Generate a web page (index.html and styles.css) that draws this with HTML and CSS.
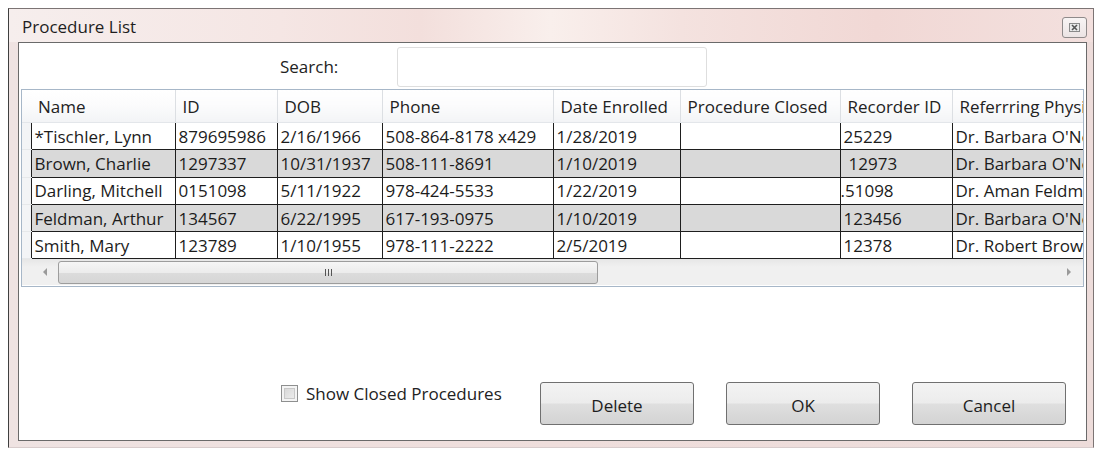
FILE: index.html
```html
<!DOCTYPE html>
<html>
<head>
<meta charset="utf-8">
<title>Procedure List</title>
<link rel="stylesheet" href="styles.css">
</head>
<body>
<div class="window">
  <div class="titlebar">
    <span class="title">Procedure List</span>
    <span class="close-btn">
      <svg width="11" height="9" viewBox="0 0 11 9"><rect x="0.5" y="0.5" width="10" height="8" fill="#e9e9e9" stroke="#8a8a8a"/><path d="M3 2 L8 7 M8 2 L3 7" stroke="#555" stroke-width="1.6"/></svg>
    </span>
  </div>
  <div class="client">
    <div class="search-row">
      <span class="search-label">Search:</span>
      <div class="search-box"></div>
    </div>
    <div class="grid">
      <table class="table">
        <colgroup>
          <col class="c-gut"><col class="c-name"><col class="c-id"><col class="c-dob"><col class="c-phone"><col class="c-date"><col class="c-closed"><col class="c-rec"><col class="c-ref">
        </colgroup>
        <thead>
          <tr>
            <th class="gut"></th><th>Name</th><th>ID</th><th>DOB</th><th>Phone</th><th>Date Enrolled</th><th>Procedure Closed</th><th>Recorder ID</th><th>Referrring Physician</th>
          </tr>
        </thead>
        <tbody>
          <tr>
            <td class="gut"></td><td>*Tischler, Lynn</td><td>879695986</td><td>2/16/1966</td><td>508-864-8178 x429</td><td>1/28/2019</td><td></td><td>25229</td><td>Dr. Barbara O'Neil</td>
          </tr>
          <tr class="alt">
            <td class="gut"></td><td>Brown, Charlie</td><td>1297337</td><td>10/31/1937</td><td>508-111-8691</td><td>1/10/2019</td><td></td><td class="rec-shift">12973</td><td>Dr. Barbara O'Neil</td>
          </tr>
          <tr>
            <td class="gut"></td><td>Darling, Mitchell</td><td>0151098</td><td>5/11/1922</td><td>978-424-5533</td><td>1/22/2019</td><td></td><td class="rec-left">.51098</td><td>Dr. Aman Feldman</td>
          </tr>
          <tr class="alt">
            <td class="gut"></td><td>Feldman, Arthur</td><td>134567</td><td>6/22/1995</td><td>617-193-0975</td><td>1/10/2019</td><td></td><td>123456</td><td>Dr. Barbara O'Neil</td>
          </tr>
          <tr>
            <td class="gut"></td><td>Smith, Mary</td><td>123789</td><td>1/10/1955</td><td>978-111-2222</td><td>2/5/2019</td><td></td><td>12378</td><td>Dr. Robert Brown</td>
          </tr>
        </tbody>
      </table>
      <div class="hscroll">
        <span class="arrow-left"></span>
        <div class="thumb"><span class="grip"><i></i><i></i><i></i></span></div>
        <span class="arrow-right"></span>
      </div>
    </div>
    <div class="bottom-bar">
      <label class="check">
        <span class="check-box"></span>
        <span class="check-text">Show Closed Procedures</span>
      </label>
      <div class="buttons">
        <span class="btn">Delete</span>
        <span class="btn">OK</span>
        <span class="btn">Cancel</span>
      </div>
    </div>
  </div>
</div>
</body>
</html>
```

FILE: styles.css
```css
html, body {
  margin: 0;
  padding: 0;
  background: #ffffff;
}
body {
  font-family: "Open Sans", "Noto Sans", "DejaVu Sans", sans-serif;
  font-size: 17px;
  color: #1c1c1c;
}
.window {
  margin: 8px 0 0 8px;
  width: 1084px;
  height: 438px;
  border: 1px solid #7c7474;
  border-left-color: #3f3f3f;
  border-bottom-color: #d8cccc;
  background: linear-gradient(90deg, #efe3e2 0%, #efdedc 50%, #eddcda 100%);
  display: flex;
  flex-direction: column;
}
.titlebar {
  height: 33px;
  display: flex;
  align-items: center;
  justify-content: space-between;
  padding: 0 6px 0 13px;
  background: linear-gradient(90deg, #f6eeed 0%, #f5e6e4 25%, #f3dfdc 38%, #f9efec 50%, #f4e2df 62%, #f1d8d5 80%, #f3e0de 100%);
}
.title {
  font-size: 17px;
  color: #1e1e1e;
  padding-top: 1px;
}
.close-btn {
  width: 23px;
  height: 19px;
  border: 1px solid #8f8a8a;
  border-radius: 3px;
  background: linear-gradient(#f8f4f4, #ece4e4);
  display: flex;
  align-items: center;
  justify-content: center;
  margin-top: 3px;
}
.client {
  margin: 0 6px 6px 9px;
  flex: 1;
  background: #ffffff;
  border: 1px solid #6a6a6a;
  display: flex;
  flex-direction: column;
}
.search-row {
  height: 46px;
  display: flex;
  align-items: center;
  padding-left: 261px;
}
.search-label {
  width: 117px;
  color: #222;
}
.search-box {
  width: 308px;
  height: 38px;
  border: 1px solid #dedede;
  border-radius: 3px;
  background: #fff;
  margin-top: 2px;
}
.grid {
  margin: 0 2px 0 2px;
  border: 1px solid #a7b7c8;
  overflow: hidden;
  height: 196px;
  display: flex;
  flex-direction: column;
}
.table {
  border-collapse: collapse;
  table-layout: fixed;
  width: 1100px;
}
.c-gut { width: 9px; }
.c-name { width: 144px; }
.c-id { width: 102px; }
.c-dob { width: 105px; }
.c-phone { width: 171px; }
.c-date { width: 127px; }
.c-closed { width: 160px; }
.c-rec { width: 112px; }
.c-ref { width: 170px; }
.table th {
  height: 32px;
  padding: 0 0 0 7px;
  text-align: left;
  font-weight: normal;
  color: #222;
  white-space: nowrap;
  overflow: hidden;
  background: linear-gradient(#ffffff 0%, #fbfbfc 50%, #f3f4f6 100%);
  border-right: 1px solid #dcdfe3;
  border-bottom: 1px solid #e3e6ea;
}
.table th.gut {
  padding: 0;
  border-right: none;
}
.table td {
  height: 26.3px;
  padding: 0 0 0 3px;
  white-space: nowrap;
  overflow: hidden;
  background: #ffffff;
  border-right: 1px solid #1e1e1e;
  border-bottom: 1px solid #1e1e1e;
  color: #1c1c1c;
}
.table tr.alt td {
  background: #d9d9d9;
}
.table td.gut,
.table tr.alt td.gut {
  padding: 0;
  background: #f3f4f6;
  border-right: 1px solid #1e1e1e;
  border-bottom: 1px solid #e6e8ea;
}
.table td.rec-shift {
  padding-left: 8px;
}
.table td.rec-left {
  padding-left: 0;
}
.hscroll {
  height: 26px;
  flex-shrink: 0;
  display: flex;
  align-items: center;
  background: linear-gradient(#e6e6e6 0%, #f0f0f0 30%, #f0f0f0 100%);
}
.arrow-left {
  width: 0;
  height: 0;
  border-top: 4px solid transparent;
  border-bottom: 4px solid transparent;
  border-right: 4px solid #9a9a9a;
  margin-left: 21px;
}
.thumb {
  width: 538px;
  height: 21px;
  margin-left: 11px;
  border: 1px solid #9d9d9d;
  border-radius: 3px;
  background: linear-gradient(#f6f6f6 0%, #ececec 50%, #dcdcdc 51%, #d6d6d6 100%);
  display: flex;
  align-items: center;
  justify-content: center;
}
.grip {
  display: flex;
  gap: 2px;
}
.grip i {
  display: block;
  width: 1px;
  height: 7px;
  background: #555;
}
.arrow-right {
  width: 0;
  height: 0;
  border-top: 4px solid transparent;
  border-bottom: 4px solid transparent;
  border-left: 4px solid #9a9a9a;
  margin-left: auto;
  margin-right: 12px;
}
.bottom-bar {
  display: flex;
  align-items: flex-start;
  padding-left: 262px;
  margin-top: 95px;
}
.check {
  width: 259px;
  display: flex;
  align-items: center;
  margin-top: 0;
}
.check-box {
  width: 15px;
  height: 15px;
  border: 1px solid #8e8f8f;
  background: linear-gradient(135deg, #d2d2d2, #f2f2f2);
  box-shadow: inset 0 0 0 2px #f4f4f4, inset 0 0 0 3px #c8c8c8;
}
.check-text {
  margin-left: 8px;
  color: #222;
}
.buttons {
  display: flex;
  gap: 32px;
}
.btn {
  width: 152px;
  border: 1px solid #707070;
  border-radius: 3px;
  background: linear-gradient(#f3f3f3 0%, #ececec 48%, #dfdfdf 52%, #d3d3d3 100%);
  display: flex;
  align-items: center;
  justify-content: center;
  padding-top: 3px;
  box-sizing: content-box;
  height: 38px;
  color: #1e1e1e;
}
```
